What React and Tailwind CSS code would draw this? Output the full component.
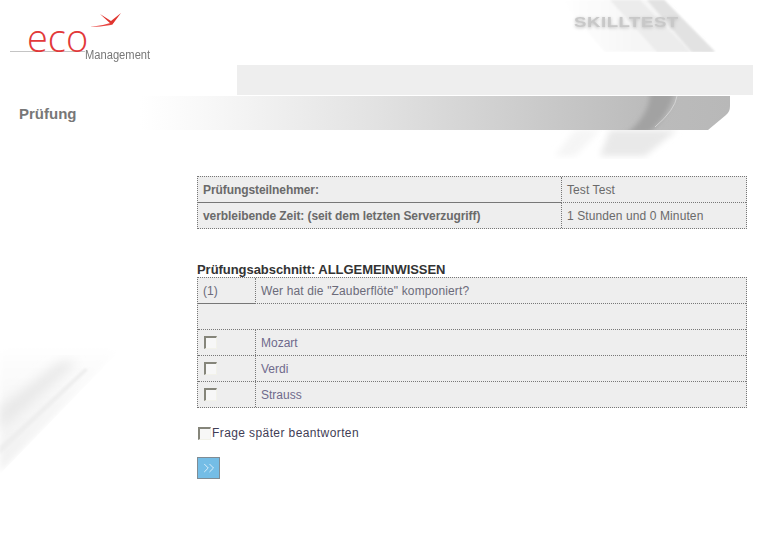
import React from "react";
import { ChevronsRight } from "lucide-react";

const answers = ["Mozart", "Verdi", "Strauss"];

const Check = () => (
  <input
    type="checkbox"
    className="appearance-none block size-[13px] bg-[#f7f7f7] border-t-2 border-l-2 border-r border-b border-t-[#85857a] border-l-[#85857a] border-r-[#f2f2ea] border-b-[#f2f2ea]"
  />
);

// die grauen Streifen im Hintergrund
const Decor = () => (
  <svg className="absolute left-0 top-0 pointer-events-none" width="758" height="551" viewBox="0 0 758 551">
    <defs>
      <filter id="b1"><feGaussianBlur stdDeviation="1" /></filter>
      <filter id="b2"><feGaussianBlur stdDeviation="2.5" /></filter>
      <filter id="b3"><feGaussianBlur stdDeviation="3" /></filter>
      <filter id="b5"><feGaussianBlur stdDeviation="6" /></filter>
      <clipPath id="top"><rect x="540" y="0" width="200" height="52" /></clipPath>
      <clipPath id="under"><rect x="540" y="130" width="170" height="30" /></clipPath>
      <clipPath id="left"><polygon points="0,340 130,340 0,474" /></clipPath>
      <clipPath id="barclip"><path d="M140 96 H730 V106 Q730 112 726 115 L708 130 H140 Z" /></clipPath>
      <linearGradient id="bar" x1="0" x2="1" y1="0" y2="0">
        <stop offset="0" stopColor="#ffffff" />
        <stop offset="0.1" stopColor="#f9f9f9" />
        <stop offset="0.4" stopColor="#e2e2e2" />
        <stop offset="0.7" stopColor="#c8c8c8" />
        <stop offset="0.85" stopColor="#bcbcbc" />
        <stop offset="1" stopColor="#b8b8b8" />
      </linearGradient>
      <linearGradient id="topg" x1="0" x2="1" y1="0" y2="0">
        <stop offset="0" stopColor="#ffffff" />
        <stop offset="0.45" stopColor="#f7f7f7" />
        <stop offset="1" stopColor="#f0f0f0" />
      </linearGradient>
      <linearGradient id="leftg" x1="0" x2="0" y1="0" y2="1">
        <stop offset="0" stopColor="#ffffff" />
        <stop offset="0.5" stopColor="#f6f6f6" />
        <stop offset="1" stopColor="#f1f1f1" />
      </linearGradient>
    </defs>

    <g clipPath="url(#top)">
      <polygon points="560,0 664,0 715,52 605,52" fill="url(#topg)" filter="url(#b1)" />
      <polygon points="610,0 640,0 690,52 657,52" fill="#ececec" filter="url(#b1)" />
      <polygon points="647,0 664,0 715,52 692,52" fill="#e2e2e2" filter="url(#b1)" />
    </g>

    <g clipPath="url(#under)">
      <polygon points="575,130 600,130 575,156 555,156" fill="#f5f5f5" filter="url(#b3)" />
      <polygon points="610,130 677,130 645,156 600,156" fill="#e9e9e9" filter="url(#b3)" />
    </g>

    <path d="M140 96 H730 V106 Q730 112 726 115 L708 130 H140 Z" fill="url(#bar)" />
    <g clipPath="url(#barclip)">
      <path d="M650 92 H674 Q672 112 648 134 H626 Q650 115 650 92 Z" fill="#a2a2a2" filter="url(#b2)" />
    </g>
    <path d="M677 96 Q675 110 655 127" fill="none" stroke="#d4d4d4" strokeWidth="1" />

    <g clipPath="url(#left)">
      <polygon points="0,345 125,345 0,472" fill="url(#leftg)" filter="url(#b3)" />
      <polygon points="0,408 60,362 78,362 0,430" fill="#e8e8e8" filter="url(#b5)" />
      <polygon points="0,446 85,368 88,370 0,454" fill="#eeeeee" filter="url(#b1)" />
    </g>
  </svg>
);

const Logo = () => (
  <div className="absolute left-[10px] top-[12px] w-[145px] h-[52px]">
    <svg className="absolute left-0 top-0" width="145" height="52" viewBox="0 0 145 52">
      <path d="M80 15 Q92 14 104 10 L101 13 Q90 15 80 15 Z" fill="#e8433f" />
      <path d="M90 2 L101 9 L111 1 L102 13 Z" fill="#e0352f" />
      <rect x="0" y="39" width="75" height="1" fill="#c4c4c4" />
    </svg>
    <span className="absolute left-[17px] top-[3px] text-[38px] leading-[44px] font-light text-[#e2393a] font-['Open_Sans',sans-serif]">eco</span>
    <span className="absolute left-[75px] top-[36px] text-[12px] leading-[14px] text-[#777] origin-left scale-x-[0.93]">Management</span>
  </div>
);

export default function App() {
  return (
    <div className="relative w-[758px] h-[551px] overflow-hidden bg-white text-[12px] font-['Liberation_Sans',Arial,sans-serif]">
      <Decor />
      <Logo />
      <span className="absolute left-[574px] top-[14px] text-[14px] leading-[16px] font-bold tracking-[0.4px] origin-left scale-x-[1.33] text-[#c8c8c8] [text-shadow:0_1px_3px_#bbb]">SKILLTEST</span>

      <div className="relative">
        {/* Kopf */}
        <div className="h-[65px]" />
        <div className="ml-[237px] w-[516px] h-[30px] bg-[#eeeeee]" />
        <h1 className="pl-[19px] pt-[10px] h-[81px] text-[15px] leading-[18px] font-bold text-[#777]">Prüfung</h1>

        <div className="ml-[197px] w-[550px]">
          {/* Teilnehmer */}
          <div className="grid grid-cols-[363px_1fr] border border-dotted border-[#777] bg-[#eeeeee] text-[#6a6a6a]">
            <div className="h-[26px] px-[5px] flex items-center font-bold tracking-[-0.08px] border-b border-[#777]">Prüfungsteilnehmer:</div>
            <div className="h-[26px] px-[5px] flex items-center tracking-[0.1px] border-l border-b border-dotted border-[#777]">Test Test</div>
            <div className="h-[25px] px-[5px] flex items-center font-bold tracking-[-0.08px]">verbleibende Zeit: (seit dem letzten Serverzugriff)</div>
            <div className="h-[25px] px-[5px] flex items-center tracking-[0.1px] border-l border-dotted border-[#777]">1 Stunden und 0 Minuten</div>
          </div>

          {/* Frage */}
          <h2 className="mt-[33px] h-[15px] leading-[15px] text-[13px] font-bold tracking-[-0.05px] text-[#333]">Prüfungsabschnitt: ALLGEMEINWISSEN</h2>
          <div className="border border-dotted border-[#777] bg-[#eeeeee] text-[#6b6b7a]">
            <div className="grid grid-cols-[57px_1fr] h-[26px]">
              <div className="px-[5px] flex items-center border-b border-[#777]">(1)</div>
              <div className="px-[5px] flex items-center tracking-[0.14px] border-l border-b border-dotted border-[#777]">Wer hat die "Zauberflöte" komponiert?</div>
            </div>
            <div className="h-[26px] border-b border-dotted border-[#777]" />
            {answers.map((a, i) => (
              <div key={a} className={`grid grid-cols-[57px_1fr] ${i < 2 ? "h-[26px] border-b border-dotted border-[#777]" : "h-[25px]"}`}>
                <div className="pl-[6px] flex items-center"><Check /></div>
                <div className="px-[5px] flex items-center border-l border-dotted border-[#777] text-[#6e6a8c]">{a}</div>
              </div>
            ))}
          </div>

          {/* später */}
          <label className="mt-[18px] flex items-center h-[14px] text-[#3f3d55] tracking-[0.4px]">
            <span className="ml-[1px] mr-[1px]"><Check /></span>
            Frage später beantworten
          </label>

          <button className="mt-[17px] w-[23px] h-[22px] flex items-center justify-center bg-[#74bde6] border border-[#7f8c94] text-[#e4f3fb]">
            <ChevronsRight size={18} strokeWidth={1.2} />
          </button>
        </div>
      </div>
    </div>
  );
}
